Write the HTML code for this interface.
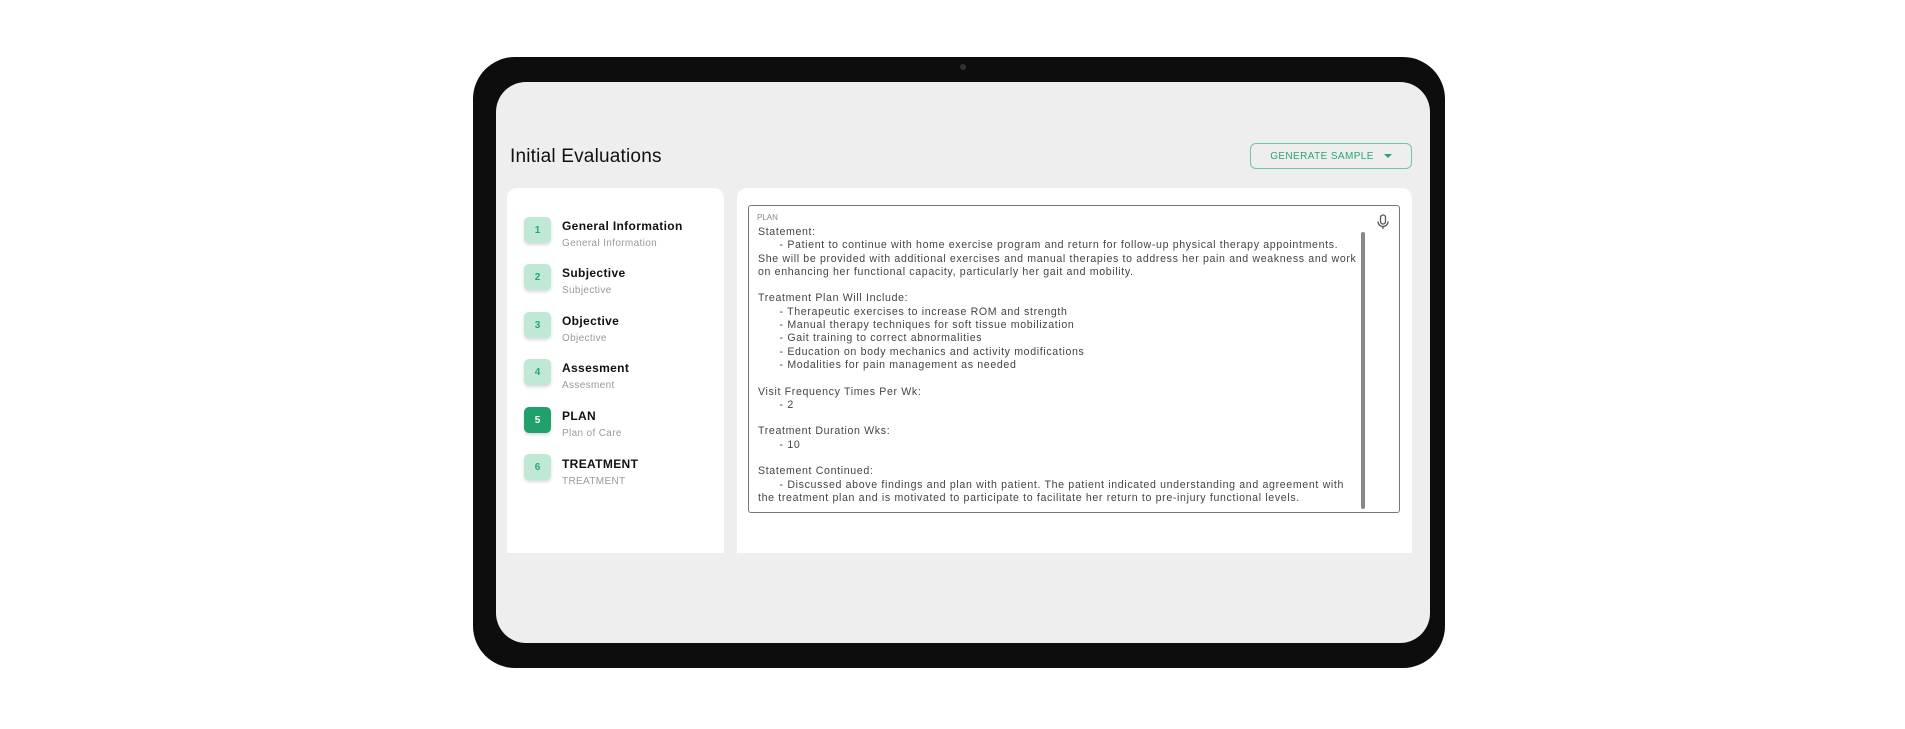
<!DOCTYPE html>
<html><head><style>
*{margin:0;padding:0;box-sizing:border-box}
body{width:1905px;height:729px;background:#fff;position:relative;overflow:hidden;font-family:"Liberation Sans",sans-serif}
.bezel{position:absolute;left:473px;top:57px;width:972px;height:611px;background:#0d0d0d;border-radius:42px}
.cam{position:absolute;left:960px;top:64px;width:6px;height:6px;border-radius:50%;background:#333}
.screen{position:absolute;left:496px;top:82px;width:934px;height:561px;background:#eeeeee;border-radius:30px}
.title{position:absolute;left:510px;top:146px;font-size:19px;color:#111;letter-spacing:.2px}
.btn{position:absolute;left:1250px;top:143px;width:162px;height:26px;border:1px solid #6cc9a0;border-radius:6px;color:#2aa672;font-size:10px;display:flex;align-items:center;justify-content:center;gap:10px;letter-spacing:.4px}
.tri{width:0;height:0;border-left:4px solid transparent;border-right:4px solid transparent;border-top:4px solid #2aa672}
.lc{position:absolute;left:507px;top:188px;width:217px;height:365px;background:#fff;border-radius:10px 10px 0 0}
.rc{position:absolute;left:737px;top:188px;width:675px;height:365px;background:#fff;border-radius:10px 10px 0 0}
.step{position:absolute;left:524px;width:27px;height:26px;border-radius:5px;background:#bfe8d5;color:#2aa672;font-size:10px;font-weight:bold;display:flex;align-items:center;justify-content:center;box-shadow:0 2px 3px rgba(0,0,0,.15)}
.step.a{background:#22a06b;color:#fff}
.st{position:absolute;left:562px;font-size:12px;font-weight:bold;color:#111;letter-spacing:.35px}
.ss{position:absolute;left:562px;font-size:10px;color:#999;letter-spacing:.35px}
.ta{position:absolute;left:748px;top:205px;width:652px;height:308px;border:1.5px solid #777;border-radius:3px}
.lbl{position:absolute;left:757px;top:213px;font-size:8px;color:#888}
.txt{position:absolute;left:758px;top:226px;font-size:10.6px;line-height:13.3px;color:#444;white-space:pre;letter-spacing:.65px}
.sb{position:absolute;left:1361px;top:232px;width:4px;height:277px;background:#888;border-radius:2px}
</style></head><body>
<div class="bezel"></div><div class="cam"></div>
<div class="screen"></div>
<div class="title">Initial Evaluations</div>
<div class="btn">GENERATE SAMPLE <span class="tri"></span></div>
<div class="lc"></div><div class="rc"></div>
<div class="step" style="top:217px">1</div><div class="st" style="top:219px">General Information</div><div class="ss" style="top:238px">General Information</div>
<div class="step" style="top:264px">2</div><div class="st" style="top:266px">Subjective</div><div class="ss" style="top:285px">Subjective</div>
<div class="step" style="top:312px">3</div><div class="st" style="top:314px">Objective</div><div class="ss" style="top:333px">Objective</div>
<div class="step" style="top:359px">4</div><div class="st" style="top:361px">Assesment</div><div class="ss" style="top:380px">Assesment</div>
<div class="step a" style="top:407px">5</div><div class="st" style="top:409px">PLAN</div><div class="ss" style="top:428px">Plan of Care</div>
<div class="step" style="top:454px">6</div><div class="st" style="top:457px">TREATMENT</div><div class="ss" style="top:476px">TREATMENT</div>
<div class="ta"></div>
<div class="lbl">PLAN</div>
<div class="txt">Statement:
      - Patient to continue with home exercise program and return for follow-up physical therapy appointments.
She will be provided with additional exercises and manual therapies to address her pain and weakness and work
on enhancing her functional capacity, particularly her gait and mobility.

Treatment Plan Will Include:
      - Therapeutic exercises to increase ROM and strength
      - Manual therapy techniques for soft tissue mobilization
      - Gait training to correct abnormalities
      - Education on body mechanics and activity modifications
      - Modalities for pain management as needed

Visit Frequency Times Per Wk:
      - 2

Treatment Duration Wks:
      - 10

Statement Continued:
      - Discussed above findings and plan with patient. The patient indicated understanding and agreement with
the treatment plan and is motivated to participate to facilitate her return to pre-injury functional levels.</div>
<div class="sb"></div>
<svg style="position:absolute;left:1376px;top:214px" width="14" height="16" viewBox="0 0 14 16" fill="none" stroke="#555" stroke-width="1.3"><rect x="4.5" y="1" width="5" height="9" rx="2.5"/><path d="M2 7.5a5 5 0 0 0 10 0M7 12.5v2.5"/></svg>
</body></html>
